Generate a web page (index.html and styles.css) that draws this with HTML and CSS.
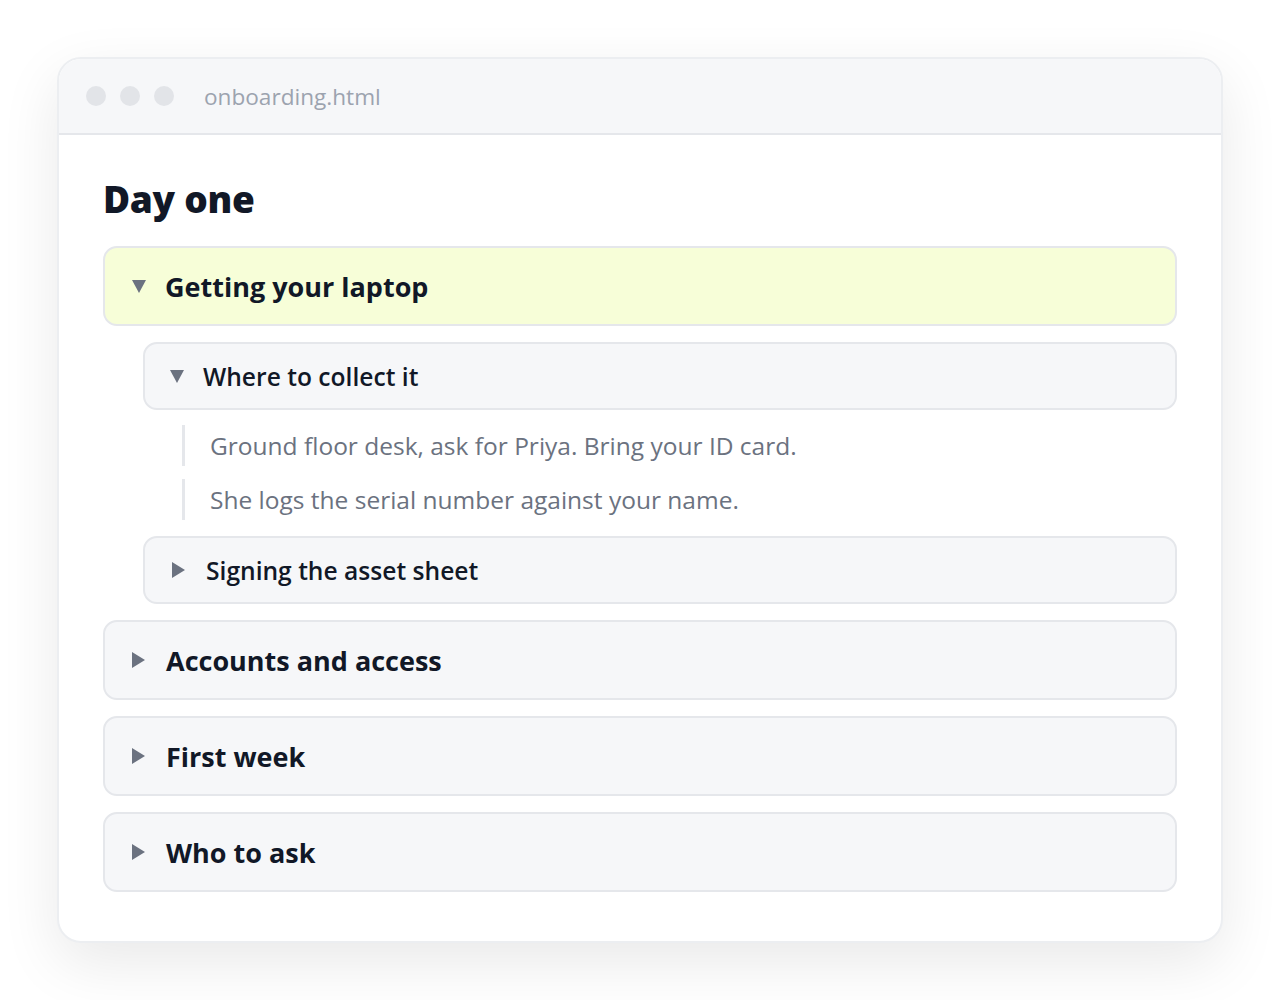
FILE: index.html
```html
<!DOCTYPE html>
<html lang="en">
<head>
    <meta charset="UTF-8" />
    <meta name="viewport" content="width=device-width, initial-scale=1.0" />
    <title>onboarding.html</title>
    <link rel="stylesheet" href="styles.css">
</head>
<body>
<div class="window">
    <div class="titlebar">
        <span class="dot"></span>
        <span class="dot"></span>
        <span class="dot"></span>
        <span class="filename">onboarding.html</span>
    </div>

    <main class="content">
        <h2>Day one</h2>

        <details class="item top" open>
            <summary class="active">Getting your laptop</summary>
            <div class="children">
                <details class="item sub" open>
                    <summary>Where to collect it</summary>
                    <div class="notes">
                        <p>Ground floor desk, ask for Priya. Bring your ID card.</p>
                        <p>She logs the serial number against your name.</p>
                    </div>
                </details>
                <details class="item sub">
                    <summary>Signing the asset sheet</summary>
                </details>
            </div>
        </details>

        <details class="item top">
            <summary>Accounts and access</summary>
        </details>
        <details class="item top">
            <summary>First week</summary>
        </details>
        <details class="item top">
            <summary>Who to ask</summary>
        </details>
    </main>
</div>
</body>
</html>
```

FILE: styles.css
```css
:root {
    --border: #e5e7eb;
    --panel: #f6f7f9;
    --muted: #6b7280;
    --ink: #111827;
    --lime: #f7fed8;
}

* {
    box-sizing: border-box;
    margin: 0;
    padding: 0;
}

body {
    font-family: 'Open Sans', 'Noto Sans', sans-serif;
    background: #fff;
    color: var(--ink);
    padding: 57px 57px 60px;
}

.window {
    background: #fff;
    border: 2px solid #eceef1;
    border-radius: 24px;
    overflow: hidden;
    box-shadow: 0 20px 60px rgba(0, 0, 0, 0.09);
}

.titlebar {
    display: flex;
    align-items: center;
    gap: 14px;
    height: 76px;
    padding: 0 27px;
    background: var(--panel);
    border-bottom: 2px solid var(--border);
}

.dot {
    width: 20px;
    height: 20px;
    border-radius: 50%;
    background: #e2e4e8;
}

.filename {
    margin-left: 16px;
    font-size: 22.6px;
    color: #9ca3af;
}

.content {
    padding: 42px 44px 49px;
    display: flex;
    flex-direction: column;
    gap: 16px;
}

h2 {
    font-size: 37px;
    font-weight: 800;
    line-height: 1.2;
    margin-bottom: 9px;
    letter-spacing: -0.3px;
}

.item summary {
    list-style: none;
    display: flex;
    align-items: center;
    background: var(--panel);
    border: 2px solid var(--border);
    border-radius: 14px;
    cursor: pointer;
}

.item summary::-webkit-details-marker {
    display: none;
}

/* disclosure triangle, closed state points right */
.item summary::before {
    content: '';
    width: 0;
    height: 0;
    border-top: 8px solid transparent;
    border-bottom: 8px solid transparent;
    border-left: 13px solid var(--muted);
    margin-right: 21px;
}

.item[open] > summary::before {
    border-left: 7.5px solid transparent;
    border-right: 7.5px solid transparent;
    border-top: 13px solid var(--muted);
    border-bottom: 0;
    margin-right: 19px;
}

.top > summary {
    height: 80px;
    padding-left: 27px;
    font-size: 27px;
    font-weight: 700;
}

.top > summary.active {
    background: var(--lime);
}

.children {
    display: flex;
    flex-direction: column;
    gap: 16px;
    padding: 16px 0 0 40px;
}

.sub > summary {
    height: 68px;
    padding-left: 27px;
    font-size: 24.6px;
    font-weight: 600;
}

.sub[open] > summary {
    padding-left: 25px;
}

.notes {
    display: flex;
    flex-direction: column;
    gap: 13px;
    padding: 15px 0 0 39px;
}

.notes p {
    border-left: 3px solid var(--border);
    padding-left: 25px;
    font-size: 24.5px;
    line-height: 41px;
    color: var(--muted);
}
```
